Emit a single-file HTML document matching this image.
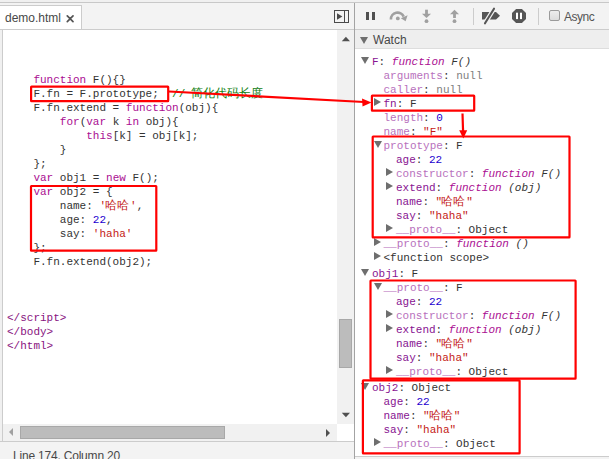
<!DOCTYPE html>
<html><head><meta charset="utf-8">
<style>
*{box-sizing:border-box}
html,body{margin:0;padding:0}
body{width:609px;height:459px;overflow:hidden;position:relative;background:#fff;font-family:"Liberation Sans",sans-serif}
.a{position:absolute}
.mono{font-family:"Liberation Mono",monospace;font-size:11px;line-height:14px;white-space:pre}
.cj{display:inline-block;width:12px;font-size:12px;text-align:center;font-weight:500;position:relative;left:-1px}
/* editor syntax */
.ed{color:#333}
.kw{color:#aa0d91}
.str{color:#c41a16}
.num{color:#1c00cf}
.cm{color:#108010}
.tag{color:#881280}
/* tree */
.tr{color:#333}
.nm{color:#881391}
.ne{color:#b871bd}
.nul{color:#808080}
.fn{font-style:italic}
.fk{color:#aa0d91;font-style:italic}
.tri-d{position:absolute;width:0;height:0;border-left:4px solid transparent;border-right:4px solid transparent;border-top:7px solid #6e6e6e}
.tri-r{position:absolute;width:0;height:0;border-top:4px solid transparent;border-bottom:4px solid transparent;border-left:7px solid #6e6e6e}
.box{position:absolute;border:2px solid #f00;border-radius:1px}
</style></head>
<body>
<!-- top strip -->
<div class="a" style="left:0;top:0;width:609px;height:2px;background:#f0f0f0"></div>
<div class="a" style="left:0;top:2px;width:609px;height:1px;background:#c8c8c8"></div>
<!-- left tab bar -->
<div class="a" style="left:0;top:3px;width:354px;height:26px;background:#f3f3f3"></div>
<div class="a" style="left:0;top:5px;width:82px;height:24px;background:#fff;border-top:1px solid #ccc;border-right:1px solid #ccc"></div>
<div class="a" style="left:5px;top:11px;font-size:12px;line-height:14px;color:#484848">demo.html</div>
<svg class="a" style="left:66px;top:15px" width="8" height="8" viewBox="0 0 8 8"><path d="M1.3 0.9L7 6.6M7 0.9L1.3 6.6" stroke="#555" stroke-width="1.7" stroke-linecap="round"/></svg>
<div class="a" style="left:0;top:29px;width:354px;height:1px;background:#ccc"></div>
<!-- sidebar toggle icon -->
<svg class="a" style="left:334px;top:10px" width="15" height="13" viewBox="0 0 15 13"><rect x="0.5" y="0.5" width="14" height="12" fill="none" stroke="#4a4a4a" stroke-width="1"/><path d="M3 3.2L8.4 6.5L3 9.8Z" fill="#4a4a4a"/><rect x="10" y="1" width="1" height="11" fill="#4a4a4a"/></svg>
<!-- editor -->
<div class="a" style="left:0;top:30px;width:2px;height:411px;background:#f0f0f0"></div>
<div class="a" style="left:2px;top:30px;width:1px;height:411px;background:#ccc"></div>
<div class="a mono ed" style="left:7px;top:31px">


    <span class="kw">function</span> F(){}
    F.fn = F.prototype;  <span class="cm">// <span class="cj">简</span><span class="cj">化</span><span class="cj">代</span><span class="cj">码</span><span class="cj">长</span><span class="cj">度</span></span>
    F.fn.extend = <span class="kw">function</span>(obj){
        <span class="kw">for</span>(<span class="kw">var</span> k <span class="kw">in</span> obj){
            <span class="kw">this</span>[k] = obj[k];
        }
    };
    <span class="kw">var</span> obj1 = <span class="kw">new</span> F();
    <span class="kw">var</span> obj2 = {
        name: <span class="str">'<span class="cj">哈</span><span class="cj">哈</span>'</span>,
        age: <span class="num">22</span>,
        say: <span class="str">'haha'</span>
    };
    F.fn.extend(obj2);



<span class="tag">&lt;/script&gt;</span>
<span class="tag">&lt;/body&gt;</span>
<span class="tag">&lt;/html&gt;</span></div>
<!-- vertical scrollbar -->
<div class="a" style="left:337px;top:30px;width:17px;height:394px;background:#f1f1f1"></div>
<svg class="a" style="left:341px;top:36px" width="10" height="6" viewBox="0 0 10 6"><path d="M0.8 5.2L9 5.2L4.9 0.8Z" fill="#505050"/></svg>
<div class="a" style="left:339px;top:319px;width:13px;height:49px;background:#bcbcbc;border:1px solid #a8a8a8"></div>
<svg class="a" style="left:341px;top:412px" width="10" height="6" viewBox="0 0 10 6"><path d="M0.8 0.8L9 0.8L4.9 5.2Z" fill="#505050"/></svg>
<!-- horizontal scrollbar -->
<div class="a" style="left:3px;top:424px;width:334px;height:17px;background:#f1f1f1"></div>
<div class="a" style="left:9px;top:428px;width:0;height:0;border-top:4px solid transparent;border-bottom:4px solid transparent;border-right:4px solid #a0a0a0"></div>
<div class="a" style="left:20px;top:426px;width:205px;height:13px;background:#bcbcbc;border:1px solid #a8a8a8"></div>
<div class="a" style="left:326px;top:429px;width:0;height:0;border-top:4px solid transparent;border-bottom:4px solid transparent;border-left:4px solid #505050"></div>
<!-- status bar -->
<div class="a" style="left:0;top:441px;width:354px;height:1px;background:#ccc"></div>
<div class="a" style="left:0;top:442px;width:354px;height:17px;background:#f3f3f3"></div>
<div class="a" style="left:13px;top:449px;font-size:12px;line-height:14px;color:#484848;letter-spacing:-0.2px">Line 174, Column 20</div>
<!-- divider -->
<div class="a" style="left:354px;top:3px;width:1px;height:456px;background:#a3a3a3"></div>

<!-- right toolbar -->
<div class="a" style="left:355px;top:3px;width:254px;height:26px;background:#f3f3f3"></div>
<div class="a" style="left:355px;top:29px;width:254px;height:1px;background:#ccc"></div>
<!-- pause -->
<div class="a" style="left:366px;top:12px;width:3px;height:8px;background:#505050"></div>
<div class="a" style="left:372px;top:12px;width:3px;height:8px;background:#505050"></div>
<!-- step over -->
<svg class="a" style="left:389px;top:10px" width="20" height="13" viewBox="0 0 20 13"><path d="M1.9 9.4A6.7 6.7 0 0 1 14.7 6.6" fill="none" stroke="#a0a0a0" stroke-width="2.6"/><path d="M11.8 8.2L18.6 5.3L16.6 11.2Z" fill="#a0a0a0"/><circle cx="8.8" cy="8.4" r="1.9" fill="#a0a0a0"/></svg>
<!-- step into -->
<svg class="a" style="left:421px;top:9px" width="11" height="16" viewBox="0 0 11 16"><rect x="4.1" y="0.7" width="2.8" height="5" fill="#a0a0a0"/><path d="M1 4.8L10 4.8L5.5 9Z" fill="#a0a0a0"/><circle cx="5.5" cy="12.2" r="1.9" fill="#a0a0a0"/></svg>
<!-- step out -->
<svg class="a" style="left:449px;top:9px" width="11" height="16" viewBox="0 0 11 16"><path d="M1 5.2L10 5.2L5.5 0.8Z" fill="#a0a0a0"/><rect x="4.1" y="5" width="2.8" height="4" fill="#a0a0a0"/><circle cx="5.5" cy="12.2" r="1.9" fill="#a0a0a0"/></svg>
<div class="a" style="left:473px;top:8px;width:1px;height:17px;background:#ccc"></div>
<!-- deactivate breakpoints -->
<svg class="a" style="left:481px;top:7px" width="20" height="18" viewBox="0 0 20 18"><path d="M1 5H15L19 8.8L15 12.6H1Z" fill="#555"/><path d="M3.5 17L13.5 1" stroke="#f3f3f3" stroke-width="4.4"/><path d="M4 16.3L13 1.7" stroke="#555" stroke-width="2.1" stroke-linecap="round"/></svg>
<!-- pause on exceptions -->
<svg class="a" style="left:512px;top:9px" width="14" height="14" viewBox="0 0 14 14"><path d="M4.1 0H9.9L14 4.1V9.9L9.9 14H4.1L0 9.9V4.1Z" fill="#555"/><rect x="4" y="3.7" width="2" height="6.4" fill="#fff"/><rect x="8" y="3.7" width="2" height="6.4" fill="#fff"/></svg>
<div class="a" style="left:538px;top:8px;width:1px;height:17px;background:#ccc"></div>
<!-- checkbox -->
<div class="a" style="left:549px;top:10px;width:11px;height:11px;border:1px solid #9a9a9a;border-radius:2px;background:linear-gradient(#ededed,#dcdcdc)"></div>
<div class="a" style="left:564px;top:10px;font-size:12px;line-height:14px;color:#555;letter-spacing:-0.5px">Async</div>

<!-- Watch header -->
<div class="a" style="left:355px;top:30px;width:254px;height:18px;background:#eee"></div>
<div class="a" style="left:355px;top:48px;width:254px;height:1px;background:#ddd"></div>
<div class="tri-d" style="left:360px;top:37px"></div>
<div class="a" style="left:373px;top:33px;font-size:12px;line-height:14px;color:#484848">Watch</div>

<!-- tree -->
<div class="a mono tr" style="left:372px;top:55px"><span class="nm">F</span>: <span class="fk">function</span> <span class="fn">F()</span></div>
<div class="tri-d" style="left:361px;top:57px"></div>
<div class="a mono tr" style="left:383.5px;top:69px"><span class="ne">arguments</span>: <span class="nul">null</span></div>
<div class="a mono tr" style="left:383.5px;top:83px"><span class="ne">caller</span>: <span class="nul">null</span></div>
<div class="tri-r" style="left:374px;top:98px"></div>
<div class="a mono tr" style="left:383.5px;top:97px"><span class="nm">fn</span>: F</div>
<div class="a mono tr" style="left:383.5px;top:111px"><span class="ne">length</span>: <span class="num">0</span></div>
<div class="a mono tr" style="left:383.5px;top:125px"><span class="ne">name</span>: <span class="str">"F"</span></div>
<div class="tri-d" style="left:374px;top:141px"></div>
<div class="a mono tr" style="left:383.5px;top:139px"><span class="ne">prototype</span>: F</div>
<div class="a mono tr" style="left:396px;top:153px"><span class="nm">age</span>: <span class="num">22</span></div>
<div class="tri-r" style="left:386px;top:168px"></div>
<div class="a mono tr" style="left:396px;top:167px"><span class="ne">constructor</span>: <span class="fk">function</span> <span class="fn">F()</span></div>
<div class="tri-r" style="left:386px;top:182px"></div>
<div class="a mono tr" style="left:396px;top:181px"><span class="nm">extend</span>: <span class="fk">function</span> <span class="fn">(obj)</span></div>
<div class="a mono tr" style="left:396px;top:195px"><span class="nm">name</span>: <span class="str">"<span class="cj">哈</span><span class="cj">哈</span>"</span></div>
<div class="a mono tr" style="left:396px;top:209px"><span class="nm">say</span>: <span class="str">"haha"</span></div>
<div class="tri-r" style="left:386px;top:224px"></div>
<div class="a mono tr" style="left:396px;top:223px"><span class="ne">__proto__</span>: Object</div>
<div class="tri-r" style="left:374px;top:238px"></div>
<div class="a mono tr" style="left:383.5px;top:237px"><span class="ne">__proto__</span>: <span class="fk">function</span> <span class="fn">()</span></div>
<div class="tri-r" style="left:374px;top:252px"></div>
<div class="a mono tr" style="left:383.5px;top:251px">&lt;function scope&gt;</div>

<div class="tri-d" style="left:361px;top:269px"></div>
<div class="a mono tr" style="left:372px;top:267px"><span class="nm">obj1</span>: F</div>
<div class="tri-d" style="left:374px;top:283px"></div>
<div class="a mono tr" style="left:383.5px;top:281px"><span class="ne">__proto__</span>: F</div>
<div class="a mono tr" style="left:396px;top:295px"><span class="nm">age</span>: <span class="num">22</span></div>
<div class="tri-r" style="left:386px;top:310px"></div>
<div class="a mono tr" style="left:396px;top:309px"><span class="ne">constructor</span>: <span class="fk">function</span> <span class="fn">F()</span></div>
<div class="tri-r" style="left:386px;top:324px"></div>
<div class="a mono tr" style="left:396px;top:323px"><span class="nm">extend</span>: <span class="fk">function</span> <span class="fn">(obj)</span></div>
<div class="a mono tr" style="left:396px;top:337px"><span class="nm">name</span>: <span class="str">"<span class="cj">哈</span><span class="cj">哈</span>"</span></div>
<div class="a mono tr" style="left:396px;top:351px"><span class="nm">say</span>: <span class="str">"haha"</span></div>
<div class="tri-r" style="left:386px;top:366px"></div>
<div class="a mono tr" style="left:396px;top:365px"><span class="ne">__proto__</span>: Object</div>

<div class="tri-d" style="left:361px;top:383px"></div>
<div class="a mono tr" style="left:372px;top:381px"><span class="nm">obj2</span>: Object</div>
<div class="a mono tr" style="left:383.5px;top:395px"><span class="nm">age</span>: <span class="num">22</span></div>
<div class="a mono tr" style="left:383.5px;top:409px"><span class="nm">name</span>: <span class="str">"<span class="cj">哈</span><span class="cj">哈</span>"</span></div>
<div class="a mono tr" style="left:383.5px;top:423px"><span class="nm">say</span>: <span class="str">"haha"</span></div>
<div class="tri-r" style="left:374px;top:438px"></div>
<div class="a mono tr" style="left:383.5px;top:437px"><span class="ne">__proto__</span>: Object</div>

<!-- bottom line right -->
<div class="a" style="left:355px;top:456px;width:254px;height:1px;background:#ccc"></div>
<div class="a" style="left:355px;top:457px;width:254px;height:2px;background:#f3f3f3"></div>

<!-- annotations -->
<svg class="a" style="left:0;top:0" width="609" height="459" viewBox="0 0 609 459">
<rect x="31.1" y="86.6" width="137.1" height="14.5" rx="0.4" fill="none" stroke="#f00" stroke-width="2.2"/>
<rect x="31.0" y="186.0" width="125.3" height="64.7" rx="0.4" fill="none" stroke="#f00" stroke-width="2.2"/>
<rect x="371.9" y="95.6" width="102.3" height="15.1" rx="0.4" fill="none" stroke="#f00" stroke-width="2.2"/>
<rect x="372.7" y="136.5" width="196.8" height="100.9" rx="0.4" fill="none" stroke="#f00" stroke-width="2.2"/>
<rect x="370.5" y="280.5" width="205.1" height="98.2" rx="0.4" fill="none" stroke="#f00" stroke-width="2.2"/>
<rect x="362.9" y="380.3" width="156.7" height="73.1" rx="0.4" fill="none" stroke="#f00" stroke-width="2.2"/>
<path d="M169 91.5L364 102" stroke="#f00" stroke-width="2.2" fill="none"/>
<path d="M371.5 102.5L362 98.5L362.5 106.5Z" fill="#f00"/>
<path d="M462.5 113.5L463.1 132" stroke="#f00" stroke-width="2.2" fill="none"/>
<path d="M463.3 138.5L459.2 130.3L467.2 130.3Z" fill="#f00"/>
</svg>
</body></html>
